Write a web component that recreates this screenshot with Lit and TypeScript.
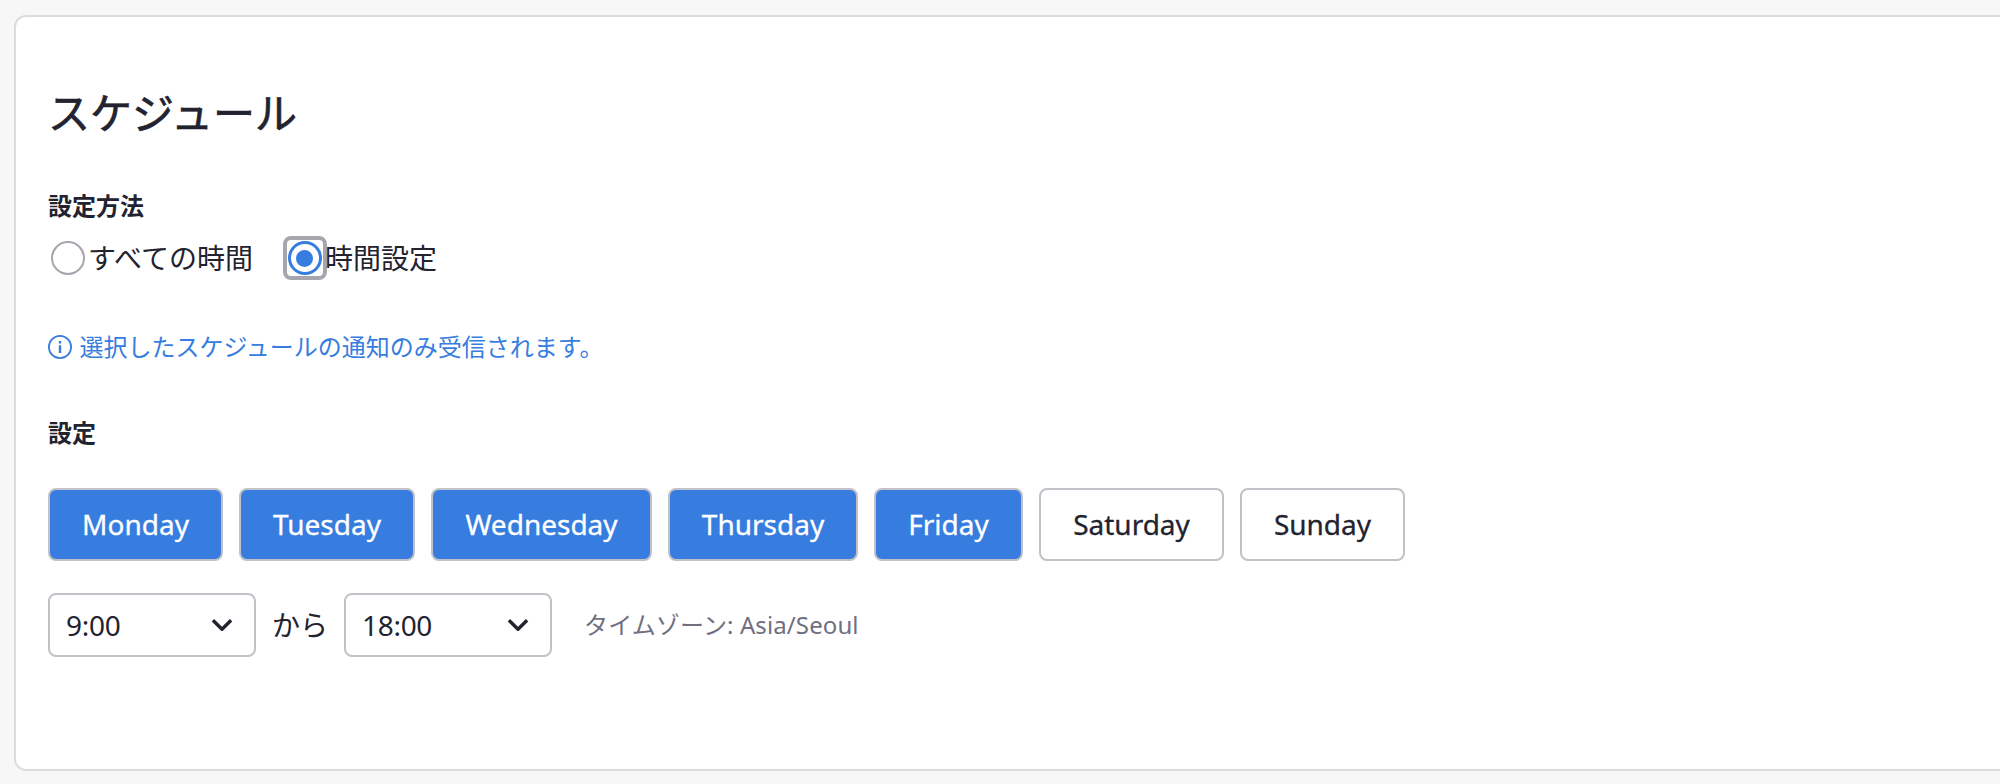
import { LitElement, html, css } from "lit";
import { customElement, state } from "lit/decorators.js";
import { classMap } from "lit/directives/class-map.js";

@customElement("time-select")
class TimeSelect extends LitElement {
  static properties = { value: {} };
  declare value: string;
  static styles = css`
    :host { display: block; }
    .box {
      box-sizing: border-box; width: 208px; height: 64px; padding: 0 20px 1px 16px;
      display: flex; align-items: center; justify-content: space-between;
      border: 2px solid #c1c1c7; border-radius: 8px; background: #fff;
      font-size: 28px; line-height: 40px; letter-spacing: -0.3px; color: #232330;
    }
    svg { display: block; margin-top: 1px; }
  `;
  render() {
    return html`<div class="box"><span>${this.value}</span>
      <svg width="24" height="24" viewBox="0 0 24 24" fill="none" stroke="#232330" stroke-width="3.4">
        <path d="M2.9 7.2 12 16.2 21.1 7.2" stroke-linejoin="round" stroke-linecap="butt" />
      </svg></div>`;
  }
}

@customElement("app-root")
class AppRoot extends LitElement {
  @state() days = [
    { name: "Monday", width: 175, on: true },
    { name: "Tuesday", width: 176, on: true },
    { name: "Wednesday", width: 221, on: true },
    { name: "Thursday", width: 190, on: true },
    { name: "Friday", width: 149, on: true },
    { name: "Saturday", width: 185, on: false },
    { name: "Sunday", width: 165, on: false },
  ];

  static styles = css`
    :host {
      display: block; box-sizing: border-box; width: 100%; height: 784px;
      padding: 15px 0 13px 14px; overflow: hidden; background: #f7f7f7;
      font-family: "Noto Sans", "Noto Sans CJK JP", sans-serif; color: #232330;
    }
    .card {
      box-sizing: border-box; height: 756px; padding: 64px 0 0 32px;
      border: 2px solid #dcdcdc; border-right: 0; border-radius: 12px 0 0 12px; background: #fff;
    }
    h2, h3, p { margin: 0; }
    h2 { font-size: 42px; line-height: 64px; font-weight: 400; -webkit-text-stroke: 0.7px #232330; }
    h3 { font-size: 24px; line-height: 36px; font-weight: 700; }
    .method { margin-top: 43px; }
    .radios { display: flex; align-items: center; height: 44px; margin-top: 12px; font-size: 28px; line-height: 44px; }
    .option { display: flex; align-items: center; }
    .option + .option { margin-left: 30px; }
    .ring { box-sizing: border-box; width: 44px; height: 44px; display: grid; place-items: center; border-radius: 8px; }
    .ring.plain { width: 40px; }
    .ring.focus { border: 4px solid #a6a6ae; margin-right: -2px; }
    .dot { box-sizing: border-box; width: 34px; height: 34px; border: 2px solid #a6a6ae; border-radius: 50%; display: grid; place-items: center; }
    .dot.on { border: 3px solid #377ddf; }
    .dot.on::after { content: ""; width: 17px; height: 17px; border-radius: 50%; background: #377ddf; }
    .info { display: flex; align-items: center; gap: 8px; margin-top: 49px; height: 36px; font-size: 24px; line-height: 36px; color: #377ddf; }
    .info span { margin-left: -0.5px; }
    .setting { margin-top: 50px; }
    .days { display: flex; gap: 16px; margin-top: 37px; }
    .day {
      box-sizing: border-box; height: 73px; display: grid; place-items: center; padding: 0 0 1px;
      border: 2px solid #c1c1c7; border-radius: 8px; background: #fff; color: #232330;
      font: 400 28px/40px "Noto Sans", "Noto Sans CJK JP", sans-serif; -webkit-text-stroke: 0.3px currentColor;
    }
    .day.on { background: #377ddf; color: #fff; }
    .times { display: flex; align-items: center; gap: 16px; margin-top: 32px; font-size: 28px; line-height: 40px; }
    .times > .zone { margin-left: 16px; font-size: 24px; letter-spacing: 0.11px; color: #6f6f80; }
  `;

  render() {
    return html`<section class="card">
      <h2>スケジュール</h2>
      <h3 class="method">設定方法</h3>
      <div class="radios">
        <label class="option"><span class="ring plain"><span class="dot"></span></span>すべての時間</label>
        <label class="option"><span class="ring focus"><span class="dot on"></span></span>時間設定</label>
      </div>
      <p class="info">
        <svg width="24" height="24" viewBox="0 0 24 24" fill="none" stroke="#377ddf">
          <circle cx="12" cy="12" r="11.1" stroke-width="1.8" />
          <path d="M12 10.3V18M12 6V8.4" stroke-width="2.4" />
        </svg><span>選択したスケジュールの通知のみ受信されます。</span>
      </p>
      <h3 class="setting">設定</h3>
      <div class="days">
        ${this.days.map((d) => html`<button class=${classMap({ day: true, on: d.on })} style="width:${d.width}px">${d.name}</button>`)}
      </div>
      <div class="times">
        <time-select .value=${"9:00"}></time-select><span>から</span><time-select .value=${"18:00"}></time-select>
        <span class="zone">タイムゾーン: Asia/Seoul</span>
      </div>
    </section>`;
  }
}
